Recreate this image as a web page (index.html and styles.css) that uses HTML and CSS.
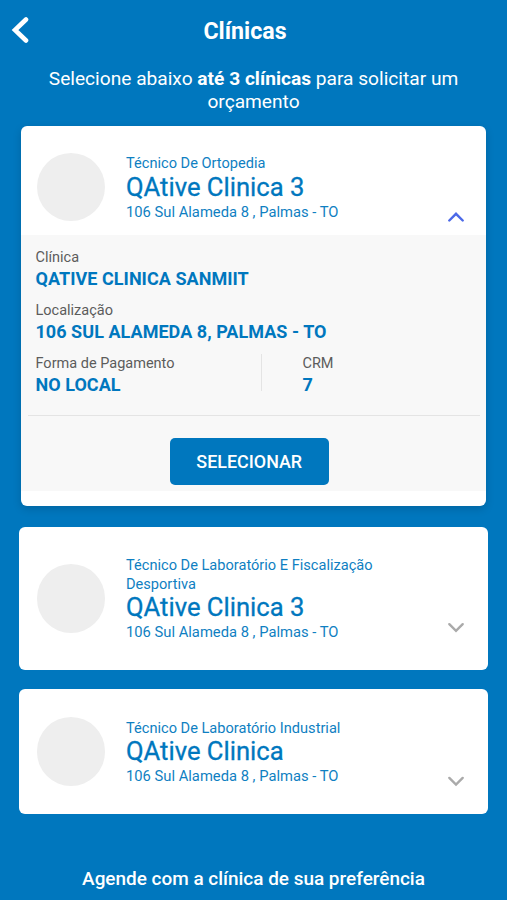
FILE: index.html
```
<!DOCTYPE html>
<html lang="pt-BR">
<head>
  <meta charset="UTF-8">
  <meta name="viewport" content="width=device-width, initial-scale=1.0">
  <title>Clínicas</title>
  <link rel="stylesheet" href="styles.css">
</head>
<body>
  <header class="topbar">
    <button class="back" aria-label="Voltar">
      <svg width="18" height="28" viewBox="0 0 18 28"><path d="M15 3.5 L4 14 L15 24.5"/></svg>
    </button>
    <h1>Clínicas</h1>
  </header>

  <p class="intro">Selecione abaixo <b>até 3 clínicas</b> para solicitar um orçamento</p>

  <main class="list">
    <section class="card card-open">
      <div class="card-head">
        <div class="avatar"></div>
        <div class="info">
          <div class="specialty">Técnico De Ortopedia</div>
          <h2>QAtive Clinica 3</h2>
          <div class="address">106 Sul Alameda 8 , Palmas - TO</div>
        </div>
        <svg class="chevron up" width="18" height="11" viewBox="0 0 18 11"><path d="M2.3 9.5 L9 2.8 L15.7 9.5"/></svg>
      </div>
      <div class="details">
        <div class="field">
          <div class="label">Clínica</div>
          <div class="value">QATIVE CLINICA SANMIIT</div>
        </div>
        <div class="field">
          <div class="label">Localização</div>
          <div class="value">106 SUL ALAMEDA 8, PALMAS - TO</div>
        </div>
        <div class="row">
          <div class="field payment">
            <div class="label">Forma de Pagamento</div>
            <div class="value">NO LOCAL</div>
          </div>
          <div class="field crm">
            <div class="label">CRM</div>
            <div class="value">7</div>
          </div>
        </div>
        <div class="action">
          <button class="select-btn">SELECIONAR</button>
        </div>
      </div>
    </section>

    <section class="card card-tall">
      <div class="card-head">
        <div class="avatar"></div>
        <div class="info">
          <div class="specialty">Técnico De Laboratório E Fiscalização Desportiva</div>
          <h2>QAtive Clinica 3</h2>
          <div class="address">106 Sul Alameda 8 , Palmas - TO</div>
        </div>
        <svg class="chevron" width="18" height="11" viewBox="0 0 18 11"><path d="M2.3 2.2 L9 8.9 L15.7 2.2"/></svg>
      </div>
    </section>

    <section class="card">
      <div class="card-head">
        <div class="avatar"></div>
        <div class="info">
          <div class="specialty">Técnico De Laboratório Industrial</div>
          <h2>QAtive Clinica</h2>
          <div class="address">106 Sul Alameda 8 , Palmas - TO</div>
        </div>
        <svg class="chevron" width="18" height="11" viewBox="0 0 18 11"><path d="M2.3 1.9 L9 8.6 L15.7 1.9"/></svg>
      </div>
    </section>
  </main>

  <footer class="footer">Agende com a clínica de sua preferência</footer>
</body>
</html>
```

FILE: styles.css
```
* {
  box-sizing: border-box;
}
body {
  margin: 0;
  height: 900px;
  overflow: hidden;
  background: #0077be;
  color: #fff;
  font-family: Roboto, sans-serif;
}
h1, h2, p {
  margin: 0;
}
button {
  border: 0;
  padding: 0;
  font-family: inherit;
  cursor: pointer;
}
svg path {
  fill: none;
  stroke-linecap: round;
}

.topbar {
  display: grid;
  grid-template-columns: 40px 1fr 40px;
  align-items: center;
  height: 60px;
  padding: 0 17px 0 0;
}
.topbar h1 {
  padding-top: 1px;
  font-size: 23.2px;
  font-weight: 700;
  line-height: 28px;
  text-align: center;
}
.back {
  display: flex;
  padding-left: 11px;
  background: none;
}
.back path {
  stroke: #fff;
  stroke-width: 4.6;
}
.intro {
  height: 66px;
  padding: 7px 30px 0;
  font-size: 19.15px;
  line-height: 23px;
  text-align: center;
}

.card {
  height: 125px;
  margin: 0 19.5px 0 19px;
  border-radius: 6px;
  background: #fff;
  color: #0077be;
}
.card-open {
  height: 380px;
  margin: 0 21px 20.5px 20.5px;
  padding-bottom: 15px;
  box-shadow: 0 3px 9px rgba(0, 0, 0, 0.15);
}
.card-tall {
  height: 143.5px;
  margin-bottom: 19px;
}
.card-head {
  display: flex;
  align-items: center;
  height: 100%;
  padding: 0 22.5px 0 17.5px;
}
.card-open .card-head {
  height: 109px;
  padding: 13px 21px 0 16px;
}
.avatar {
  flex: none;
  width: 68.5px;
  height: 68.5px;
  border-radius: 50%;
  background: #eee;
}
.info {
  flex: 1;
  padding: 1px 50px 0 21px;
}
.specialty, .address {
  color: #0f7fc2;
  font-size: 14.6px;
  line-height: 18.5px;
}
.address {
  font-size: 14.75px;
}
.info h2 {
  padding-bottom: 2px;
  font-size: 25.6px;
  font-weight: 400;
  line-height: 28px;
  -webkit-text-stroke: 0.3px #0077be;
}
.chevron {
  flex: none;
  margin-top: 59px;
}
.chevron path {
  stroke: #aaa;
  stroke-width: 2.4;
}
.chevron.up path {
  stroke: #4c69e8;
}

.details {
  height: 256px;
  padding: 13px 6px 0 7px;
  background: #f8f8f8;
}
.field {
  height: 53px;
  padding-left: 8px;
}
.label {
  color: #5c5c5c;
  font-size: 14.5px;
  line-height: 20px;
}
.value {
  font-size: 18px;
  font-weight: 700;
  line-height: 22px;
  letter-spacing: 0.04px;
}
.row {
  display: flex;
  height: 62px;
  border-bottom: 1px solid #e4e4e4;
}
.payment {
  width: 234px;
  height: 37px;
  border-right: 1px solid #e4e4e4;
}
.crm {
  padding-left: 41px;
}
.action {
  display: flex;
  justify-content: center;
  padding-top: 22px;
}
.select-btn {
  width: 159px;
  height: 47px;
  margin-right: 9px;
  border-radius: 5px;
  background: #0077be;
  color: #fff;
  font-size: 17.9px;
  font-weight: 500;
}

.footer {
  padding-top: 53px;
  font-size: 18.95px;
  font-weight: 500;
  line-height: 24px;
  text-align: center;
}
```
